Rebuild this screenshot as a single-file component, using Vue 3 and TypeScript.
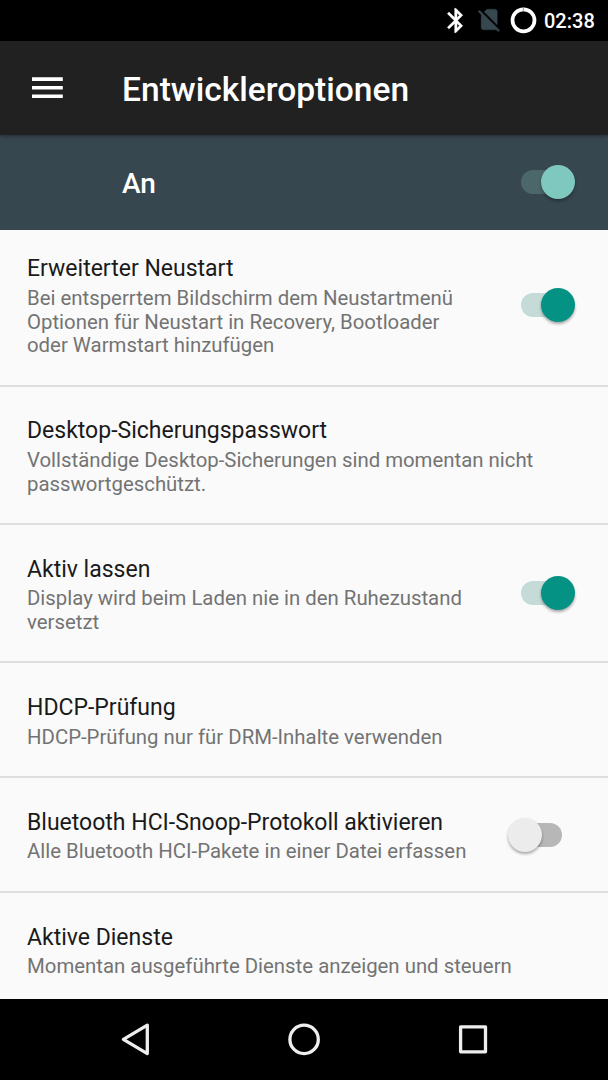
<script setup lang="ts">
interface Option {
  title: string
  lines: string[]
  height: number
  state?: 'on' | 'off'
}
const options: Option[] = [
  { title: 'Erweiterter Neustart', lines: ['Bei entsperrtem Bildschirm dem Neustartmenü', 'Optionen für Neustart in Recovery, Bootloader', 'oder Warmstart hinzufügen'], height: 157, state: 'on' },
  { title: 'Desktop-Sicherungspasswort', lines: ['Vollständige Desktop-Sicherungen sind momentan nicht', 'passwortgeschützt.'], height: 138 },
  { title: 'Aktiv lassen', lines: ['Display wird beim Laden nie in den Ruhezustand', 'versetzt'], height: 138, state: 'on' },
  { title: 'HDCP-Prüfung', lines: ['HDCP-Prüfung nur für DRM-Inhalte verwenden'], height: 115 },
  { title: 'Bluetooth HCI-Snoop-Protokoll aktivieren', lines: ['Alle Bluetooth HCI-Pakete in einer Datei erfassen'], height: 115, state: 'off' },
  { title: 'Aktive Dienste', lines: ['Momentan ausgeführte Dienste anzeigen und steuern'], height: 107 },
]
</script>

<template>
  <div class="screen">
    <header class="status">
      <svg width="104" height="41" viewBox="440 0 104 41" fill="none">
        <path transform="translate(441.2 5.9) scale(1.22)" fill="#fff" stroke="#fff" stroke-width=".3" d="M17.71 7.71L12 2h-1v7.59L6.41 5 5 6.41 10.59 12 5 17.59 6.41 19 11 14.41V22h1l5.71-5.71-4.3-4.29 4.3-4.29zM13 5.83l1.88 1.88L13 9.59V5.83zm1.88 10.46L13 18.17v-3.76l1.88 1.88z" />
        <path transform="translate(475.4 5.7) scale(1.15)" fill="#37474f" stroke="#37474f" stroke-width=".3" d="M18.99 5c0-1.1-.89-2-1.99-2h-7L7.66 5.34 19 16.68 18.99 5zM3.65 3.88L2.38 5.15 5 7.77V19c0 1.1.9 2 2 2h10.01c.35 0 .67-.1.96-.26l1.88 1.88 1.27-1.27L3.65 3.88z" />
        <circle cx="523.5" cy="20.3" r="11" stroke="#fff" stroke-width="3.7" />
        <path d="M523.3 7.5V11.3" stroke="#999" />
      </svg>
      <span class="clock">02:38</span>
    </header>
    <div class="toolbar">
      <svg class="menu" width="32" height="22" viewBox="0 0 32 22"><path d="M0 2.1H30.8M0 10.7H30.8M0 19.3H30.8" stroke="#fff" stroke-width="3.6" /></svg>
      <h1>Entwickleroptionen</h1>
    </div>
    <div class="master">
      <span>An</span>
      <div class="switch master-switch"><i class="track" /><i class="thumb" /></div>
    </div>
    <main>
      <section v-for="o in options" :key="o.title" class="row" :style="{ height: o.height + 'px' }">
        <div class="copy">
          <h2>{{ o.title }}</h2>
          <p v-for="line in o.lines" :key="line">{{ line }}</p>
        </div>
        <div v-if="o.state" class="switch" :class="o.state"><i class="track" /><i class="thumb" /></div>
      </section>
    </main>
    <nav>
      <svg width="608" height="81" viewBox="0 999 608 81" fill="none" stroke="#eee" stroke-width="3.3" stroke-linejoin="round">
        <path d="M123.4 1039.4L147.3 1025.2V1053.6Z" />
        <circle cx="304.1" cy="1039.4" r="14.2" />
        <rect x="460.6" y="1026.9" width="24.9" height="24.9" />
      </svg>
    </nav>
  </div>
</template>

<style>
html, body { margin: 0; background: #000; }
</style>
<style scoped>
.screen { width: 608px; height: 1080px; overflow: hidden; display: flex; flex-direction: column; background: #fafafa; font-family: Roboto, sans-serif; }
.status { height: 41px; flex: none; background: #000; display: flex; align-items: center; padding-left: 440px; color: #fff; }
.status svg { flex: none; }
.clock { font-size: 20px; font-weight: 500; line-height: 40px; padding-top: 1px; }
.toolbar { height: 94px; flex: none; background: #212121; display: flex; align-items: center; color: #fff; z-index: 1; box-shadow: 0 1px 4px #0006; }
.menu { margin-left: 32px; width: 32px; flex: none; }
h1 { margin: 3px 0 0 58px; font-size: 33.55px; font-weight: 500; line-height: 40px; white-space: nowrap; }
.master { height: 95px; flex: none; background: #37474f; display: flex; align-items: center; justify-content: space-between; padding: 0 27px 2px 122px; box-sizing: border-box; color: #fff; font-size: 28px; font-weight: 500; }
.master span { padding-top: 4px; }
main { height: 769px; overflow: hidden; flex: none; }
.row { box-sizing: border-box; border-bottom: 2px solid #dedede; padding: 0 27px; display: flex; align-items: center; justify-content: space-between; }
.row:first-child { padding-bottom: 6px; }
.row:last-child { border: 0; }
.copy { white-space: nowrap; align-self: flex-start; padding-top: 29px; }
.row:first-child .copy { padding-top: 24px; }
h2 { margin: 0 0 3px; font-size: 23px; line-height: 30px; font-weight: 400; color: #1a1a1a; }
.row:nth-child(n+3) h2 { padding-top: 1px; margin-bottom: 2px; }
.row:nth-child(4) h2 { margin-bottom: 3px; }
p { margin: 0; font-size: 20.38px; line-height: 23.6px; color: #737373; }
.switch { position: relative; width: 68px; height: 40px; flex: none; }
.track { position: absolute; left: 8px; top: 8px; width: 50px; height: 24px; border-radius: 12px; background: #b7b7b7; }
.thumb { position: absolute; left: 28px; top: 3px; width: 34px; height: 34px; border-radius: 50%; background: #039284; box-shadow: 0 2px 3px #0005; }
.on .track { background: #c4dbd8; }
.off .track { left: -1px; }
.off .thumb { left: -5px; background: #ececec; }
.master-switch .track { background: #4c6769; }
.master-switch .thumb { background: #7fc8c0; }
nav { height: 81px; flex: none; background: #000; }
nav svg { display: block; }
</style>
